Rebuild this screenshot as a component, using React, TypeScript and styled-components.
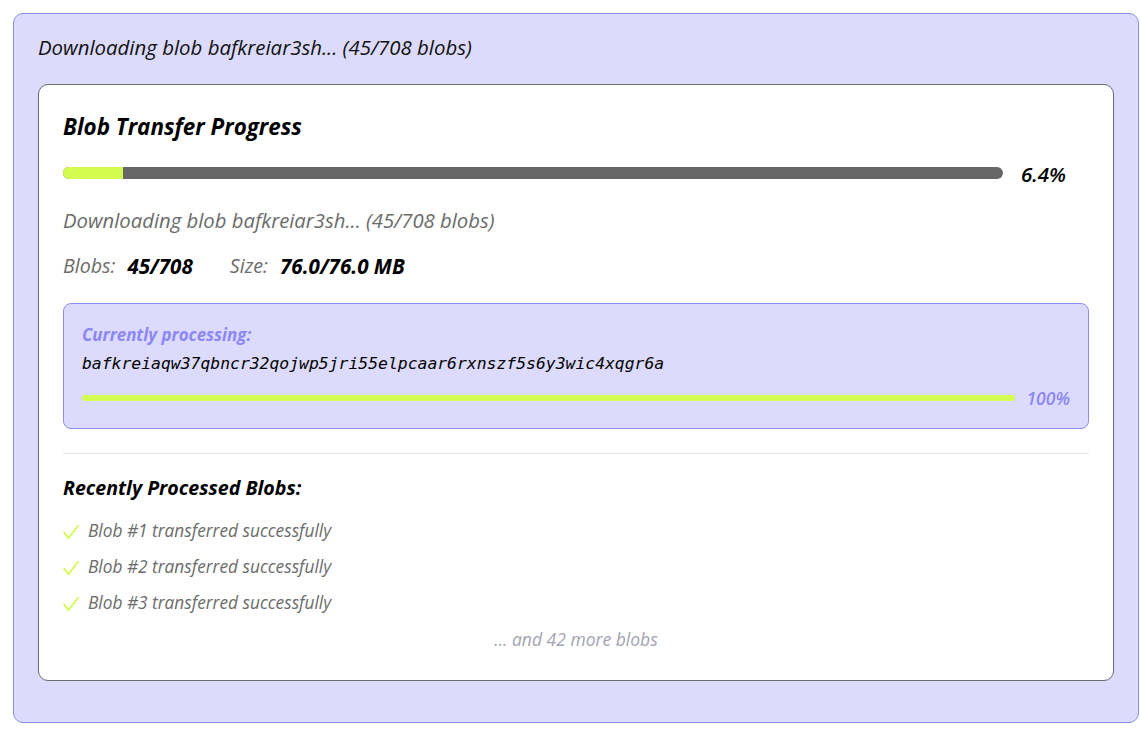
import React from "react";
import styled, { createGlobalStyle } from "styled-components";

const GlobalStyle = createGlobalStyle`
  html, body {
    margin: 0;
    padding: 0;
    background: #ffffff;
  }
  body {
    font-family: "Open Sans", "Noto Sans", sans-serif;
    font-style: italic;
  }
`;

const recent = [1, 2, 3];

const CheckIcon = () => (
  <CheckSvg viewBox="0 0 16 16" width="16" height="16">
    <path d="M1.2 8.6 L5.4 14.2 L15 1.8" fill="none" stroke="#d4fb4f" strokeWidth="1.8" strokeLinecap="round" strokeLinejoin="round" />
  </CheckSvg>
);

const App = () => {
  const done = 45;
  const total = 708;
  const percent = (done / total) * 100;

  return (
    <>
      <GlobalStyle />
      <Page>
        <Outer>
          <Header>Downloading blob bafkreiar3sh... (45/708 blobs)</Header>
          <Card>
            <Title>Blob Transfer Progress</Title>
            <BarRow>
              <Track>
                <Fill style={{ width: `${percent}%` }} />
              </Track>
              <Percent>{percent.toFixed(1)}%</Percent>
            </BarRow>
            <Status>Downloading blob bafkreiar3sh... (45/708 blobs)</Status>
            <Stats>
              <Stat>
                <StatLabel>Blobs:</StatLabel>
                <StatValue>45/708</StatValue>
              </Stat>
              <Stat>
                <StatLabel>Size:</StatLabel>
                <StatValue>76.0/76.0 MB</StatValue>
              </Stat>
            </Stats>
            <Processing>
              <ProcLabel>Currently processing:</ProcLabel>
              <Hash>bafkreiaqw37qbncr32qojwp5jri55elpcaar6rxnszf5s6y3wic4xqgr6a</Hash>
              <ProcRow>
                <ProcTrack>
                  <ProcFill style={{ width: "100%" }} />
                </ProcTrack>
                <ProcPercent>100%</ProcPercent>
              </ProcRow>
            </Processing>
            <Divider />
            <SectionTitle>Recently Processed Blobs:</SectionTitle>
            <List>
              {recent.map((n) => (
                <Item key={n}>
                  <CheckIcon />
                  <span>Blob #{n} transferred successfully</span>
                </Item>
              ))}
            </List>
            <More>... and 42 more blobs</More>
          </Card>
        </Outer>
      </Page>
    </>
  );
};

export default App;

const Page = styled.div`
  padding: 13px 2px 9px 13px;
  box-sizing: border-box;
`;

const Outer = styled.div`
  background: #dcdbfd;
  border: 1px solid #8f8ce8;
  border-radius: 10px;
  padding: 20px 24px 42px 24px;
  box-sizing: border-box;
  height: 710px;
`;

const Header = styled.div`
  font-size: 20.4px;
  line-height: 26px;
  color: #111;
  margin-bottom: 24px;
`;

const Card = styled.div`
  background: #fff;
  border: 1px solid #6b6b6b;
  border-radius: 10px;
  padding: 27px 24px 26px 24px;
  box-sizing: border-box;
  height: 597px;
`;

const Title = styled.div`
  font-size: 22.4px;
  font-weight: 700;
  line-height: 30px;
  color: #000;
  margin-bottom: 24px;
`;

const BarRow = styled.div`
  display: flex;
  align-items: center;
  gap: 18px;
  height: 14px;
`;

const Track = styled.div`
  width: 940px;
  height: 12px;
  background: #666666;
  border-radius: 6px;
  overflow: hidden;
`;

const Fill = styled.div`
  height: 100%;
  background: #d4fb4f;
`;

const Percent = styled.div`
  font-size: 20.5px;
  font-weight: 600;
  color: #000;
  line-height: 24px;
  margin-top: 2px;
`;

const Status = styled.div`
  font-size: 20.3px;
  color: #6b6b6b;
  line-height: 26px;
  margin-top: 27px;
`;

const Stats = styled.div`
  display: flex;
  gap: 37px;
  margin-top: 20px;
  line-height: 26px;
`;

const Stat = styled.div`
  display: flex;
  gap: 12px;
  font-size: 19.6px;
`;

const StatLabel = styled.span`
  color: #6b6b6b;
`;

const StatValue = styled.span`
  color: #000;
  font-weight: 700;
  font-size: 20.6px;
`;

const Processing = styled.div`
  margin-top: 24px;
  background: #dcdbfd;
  border: 1px solid #8f8cf0;
  border-radius: 8px;
  padding: 20px 18px 19px 18px;
  box-sizing: border-box;
  height: 126px;
`;

const ProcLabel = styled.div`
  font-size: 16.9px;
  font-weight: 700;
  color: #8c87f5;
  line-height: 22px;
`;

const Hash = styled.div`
  font-family: "DejaVu Sans Mono", "Liberation Mono", monospace;
  font-size: 16.4px;
  font-style: italic;
  color: #000;
  line-height: 24px;
  margin-top: 6px;
`;

const ProcRow = styled.div`
  display: flex;
  align-items: center;
  gap: 11px;
  margin-top: 10px;
`;

const ProcTrack = styled.div`
  flex: 1;
  height: 6px;
  border-radius: 3px;
  background: #666;
  overflow: hidden;
`;

const ProcFill = styled.div`
  height: 100%;
  background: #d4fb4f;
`;

const ProcPercent = styled.div`
  font-size: 17.6px;
  font-weight: 600;
  color: #8c87f5;
  line-height: 22px;
  margin-top: 1px;
`;

const Divider = styled.div`
  height: 1px;
  background: #e6e6ef;
  margin-top: 24px;
`;

const SectionTitle = styled.div`
  font-size: 19.6px;
  font-weight: 700;
  color: #000;
  line-height: 26px;
  margin-top: 21px;
`;

const List = styled.div`
  display: flex;
  flex-direction: column;
  gap: 12px;
  margin-top: 18px;
`;

const Item = styled.div`
  display: flex;
  align-items: center;
  gap: 9px;
  font-size: 17.3px;
  color: #6b6b6b;
  line-height: 24px;
`;

const CheckSvg = styled.svg`
  flex-shrink: 0;
  margin-top: 1px;
`;

const More = styled.div`
  text-align: center;
  font-size: 17.5px;
  color: #a3a3b3;
  line-height: 24px;
  margin-top: 12px;
`;
